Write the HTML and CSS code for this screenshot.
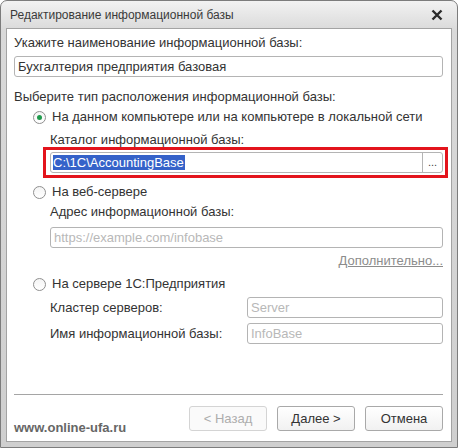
FILE: index.html
```html
<!DOCTYPE html>
<html>
<head>
  <title>Редактирование информационной базы</title>
  <link rel="stylesheet" href="styles.css">
</head>
<body>
  <div class="window">
    <div class="titlebar">
      <span class="title">Редактирование информационной базы</span>
      <svg class="close" width="12" height="12" viewBox="0 0 12 12">
        <path d="M1.5 1.5 L10.5 10.5 M10.5 1.5 L1.5 10.5" stroke="#2b2b2b" stroke-width="2.4" fill="none"/>
      </svg>
    </div>

    <div class="content">
      <div class="label first">Укажите наименование информационной базы:</div>
      <div class="field name-field">Бухгалтерия предприятия базовая</div>

      <div class="label section">Выберите тип расположения информационной базы:</div>

      <div class="radio-row r1">
        <span class="radio checked"></span>
        <span>На данном компьютере или на компьютере в локальной сети</span>
      </div>
      <div class="sub-label">Каталог информационной базы:</div>
      <div class="field path-field marked">
        <span class="path-text"><span class="selected">C:\1C\AccountingBase</span></span>
        <span class="dots">...</span>
      </div>

      <div class="radio-row r2">
        <span class="radio"></span>
        <span>На веб-сервере</span>
      </div>
      <div class="sub-label">Адрес информационной базы:</div>
      <div class="field sub-field url-field placeholder">https://example.com/infobase</div>
      <div class="more"><span>Дополнительно...</span></div>

      <div class="radio-row r3">
        <span class="radio"></span>
        <span>На сервере 1С:Предприятия</span>
      </div>
      <div class="server-grid">
        <span class="grid-label">Кластер серверов:</span>
        <div class="field placeholder">Server</div>
        <span class="grid-label">Имя информационной базы:</span>
        <div class="field placeholder">InfoBase</div>
      </div>

      <div class="spacer"></div>
      <div class="separator"></div>
      <div class="footer">
        <span class="site">www.online-ufa.ru</span>
        <div class="buttons">
          <button class="btn" disabled>&lt; Назад</button>
          <button class="btn">Далее &gt;</button>
          <button class="btn">Отмена</button>
        </div>
      </div>
    </div>
  </div>
</body>
</html>
```

FILE: styles.css
```css
body {
  margin: 0;
  background-color: #ffffff;
  font-family: "Liberation Sans", Arial, sans-serif;
  font-size: 13px;
  color: #333333;
}

.window {
  width: 458px;
  height: 448px;
  box-sizing: border-box;
  border: 1px solid #7c7c7c;
  border-radius: 7px 7px 0 0;
  background: linear-gradient(#f2f2f2, #d9d9d9 30px, #cfcfcf);
  padding: 0 5px 5px 5px;
  display: flex;
  flex-direction: column;
}

.titlebar {
  height: 27px;
  flex-shrink: 0;
  display: flex;
  align-items: center;
  justify-content: space-between;
  padding: 0 9px 0 4px;
}

.title {
  font-size: 12px;
  color: #3a3a3a;
}

.close {
  display: block;
}

.content {
  flex: 1;
  background-color: #ffffff;
  border: 1px solid #a3a3a3;
  padding: 0 8px 10px 7px;
  display: flex;
  flex-direction: column;
}

.label,
.sub-label,
.radio-row,
.more {
  line-height: 16px;
  height: 16px;
}

.first {
  margin-top: 6px;
}

.section {
  margin-top: 12px;
}

.field {
  height: 21px;
  box-sizing: border-box;
  border: 1px solid #b4b4b4;
  border-radius: 3px;
  padding: 0 3px;
  line-height: 19px;
  color: #333333;
  white-space: nowrap;
  overflow: hidden;
}

.name-field {
  margin-top: 5px;
}

.placeholder {
  color: #b8b8b8;
}

.radio-row {
  display: flex;
  align-items: center;
  gap: 6px;
  padding-left: 19px;
  margin-top: 4px;
}

.r2 {
  margin-top: 11px;
}

.r3 {
  margin-top: 7px;
}

.radio {
  width: 13px;
  height: 13px;
  box-sizing: border-box;
  border: 1px solid #8f8f8f;
  border-radius: 50%;
  background: linear-gradient(#f4f4f4, #ffffff);
  display: flex;
  align-items: center;
  justify-content: center;
}

.radio.checked::after {
  content: "";
  width: 5px;
  height: 5px;
  border-radius: 50%;
  background-color: #1f9a4c;
}

.sub-label {
  margin-left: 36px;
  margin-top: 7px;
}

.r2 + .sub-label {
  margin-top: 4px;
}

.path-field {
  margin-left: 36px;
  margin-top: 4px;
  display: flex;
  padding: 0;
  overflow: visible;
}

/* red annotation frame drawn over the field */
.marked {
  position: relative;
}

.marked::after {
  content: "";
  position: absolute;
  left: -8px;
  right: -6px;
  top: -6px;
  bottom: -6px;
  border: 3px solid #e3141c;
}

.path-text {
  flex: 1;
  padding-left: 2px;
  display: flex;
  align-items: center;
}

.selected {
  background-color: #3562c9;
  color: #ffffff;
  line-height: 15px;
  padding-right: 1px;
}

.dots {
  width: 19px;
  border-left: 1px solid #b4b4b4;
  text-align: center;
  font-size: 11px;
  color: #444444;
}

.sub-field {
  margin-left: 36px;
}

.url-field {
  margin-top: 7px;
}

.more {
  margin-top: 5px;
  text-align: right;
  color: #8c8c8c;
}

.more span {
  text-decoration: underline;
}

.server-grid {
  display: grid;
  grid-template-columns: 197px 1fr;
  row-gap: 5px;
  align-items: center;
  margin-left: 36px;
  margin-top: 5px;
}

.grid-label {
  line-height: 16px;
}

.spacer {
  flex: 1;
}

.separator {
  height: 1px;
  background-color: #a5a5a5;
  margin-bottom: 11px;
}

.footer {
  display: flex;
  justify-content: space-between;
  align-items: flex-end;
}

.site {
  font-weight: bold;
  color: #666666;
  line-height: 16px;
  margin-bottom: -5px;
}

.buttons {
  display: flex;
  gap: 10px;
}

.btn {
  width: 78px;
  height: 25px;
  border: 1px solid #a9a9a9;
  border-radius: 3px;
  background: linear-gradient(#ffffff, #f1f1f1);
  font-family: "Liberation Sans", Arial, sans-serif;
  font-size: 13px;
  color: #333333;
  padding: 0;
}

.btn:disabled {
  border-color: #d4d4d4;
  color: #adadad;
  background: #fafafa;
}
```
